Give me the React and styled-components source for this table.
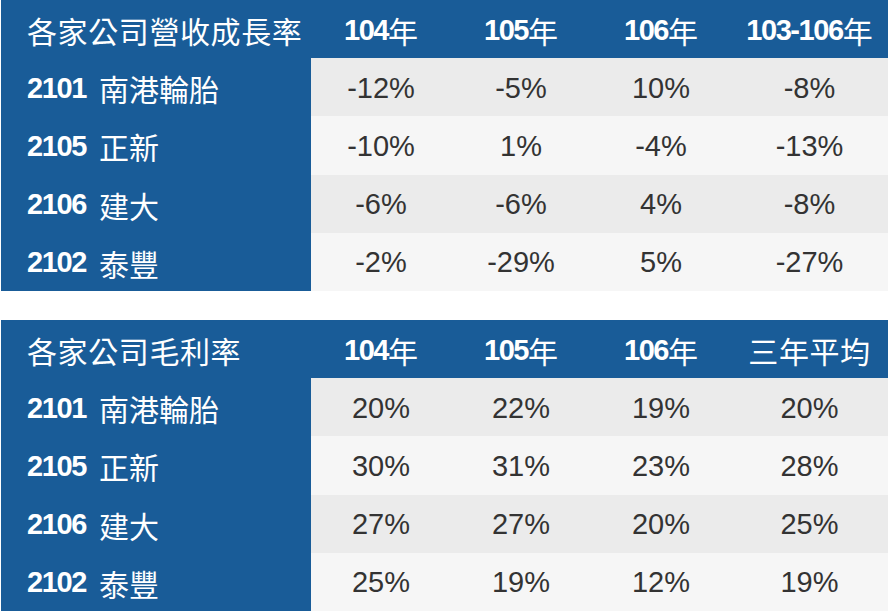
import React from 'react';
import styled, { createGlobalStyle } from 'styled-components';

const GlobalStyle = createGlobalStyle`
    html, body {
        margin:0;
        padding:0;
        background:white;
    }
    body {
        font-family:"Liberation Sans", "Noto Sans CJK TC", sans-serif;
    }
`

const colors = {
    blue: '#195c98',
    rowDark: '#ebebeb',
    rowLight: '#f6f6f6',
    text: '#333333',
}

const Page = styled.div`
    width:888px;
    padding:0 0 0 1px;
    box-sizing:border-box;
    display:flex;
    flex-direction:column;
    gap:29px;
`

const Table = styled.div`
    display:grid;
    grid-template-columns:310px 140px 140px 140px 1fr;
    grid-auto-rows:58.2px;
`

const Cell = styled.div`
    display:flex;
    align-items:center;
    justify-content:${props => props.left ? 'flex-start' : 'center'};
    padding-left:${props => props.left ? '26px' : '0'};
    padding-top:2px;
    box-sizing:border-box;
    background:${props => props.head ? colors.blue : (props.odd ? colors.rowDark : colors.rowLight)};
    color:${props => props.head ? 'white' : colors.text};
    font-size:29px;
    white-space:nowrap;
`

const Num = styled.span`
    font-weight:bold;
    letter-spacing:-1.4px;
`

const Cjk = styled.span`
    font-family:"Noto Sans CJK TC", sans-serif;
    font-weight:400;
    font-size:30px;
    letter-spacing:${props => props.wide ? '0.6px' : '0'};
    margin-left:${props => props.gap ? '13px' : '0'};
`

const companies = [
    ['2101', '南港輪胎'],
    ['2105', '正新'],
    ['2106', '建大'],
    ['2102', '泰豐'],
]

const tables = [
    {
        title: '各家公司營收成長率',
        heads: [['104', '年'], ['105', '年'], ['106', '年'], ['103-106', '年']],
        rows: [
            ['-12%', '-5%', '10%', '-8%'],
            ['-10%', '1%', '-4%', '-13%'],
            ['-6%', '-6%', '4%', '-8%'],
            ['-2%', '-29%', '5%', '-27%'],
        ],
    },
    {
        title: '各家公司毛利率',
        heads: [['104', '年'], ['105', '年'], ['106', '年'], [null, '三年平均']],
        rows: [
            ['20%', '22%', '19%', '20%'],
            ['30%', '31%', '23%', '28%'],
            ['27%', '27%', '20%', '25%'],
            ['25%', '19%', '12%', '19%'],
        ],
    },
]

const App = () => {
    return (
        <Page>
            <GlobalStyle/>
            {
                tables.map(t =>
                    <Table key={t.title}>
                        <Cell head left><Cjk wide>{t.title}</Cjk></Cell>
                        {t.heads.map((h, i) =>
                            <Cell head key={i}>
                                {h[0] && <Num>{h[0]}</Num>}
                                <Cjk wide={!h[0]}>{h[1]}</Cjk>
                            </Cell>
                        )}
                        {t.rows.map((r, ri) =>
                            <React.Fragment key={ri}>
                                <Cell head left>
                                    <Num>{companies[ri][0]}</Num>
                                    <Cjk gap>{companies[ri][1]}</Cjk>
                                </Cell>
                                {r.map((v, ci) =>
                                    <Cell key={ci} odd={ri % 2 === 0}>{v}</Cell>
                                )}
                            </React.Fragment>
                        )}
                    </Table>
                )
            }
        </Page>
    );
}

export default App;
